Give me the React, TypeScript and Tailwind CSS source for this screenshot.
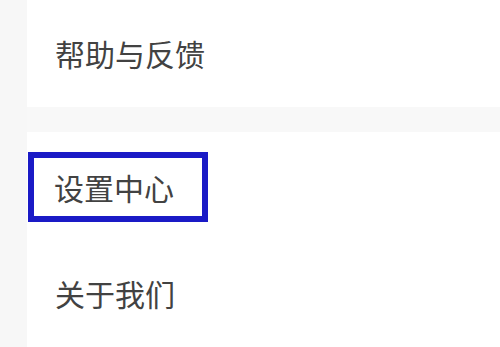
export default function App() {
  const font = { fontFamily: '"Noto Sans CJK SC", "Noto Sans", sans-serif' }
  return (
    <div className="flex h-[347px] w-[500px] overflow-hidden bg-[#f7f7f7]" style={font}>
      {/* left strip */}
      <div className="w-[27px] shrink-0" />

      <div className="flex flex-1 flex-col">
        {/* help row */}
        <div className="flex h-[107px] shrink-0 items-center bg-white pb-[1px] pl-[28px]">
          <span className="text-[30px] leading-none text-[#424242]">帮助与反馈</span>
        </div>

        {/* gap band */}
        <div className="h-[25px] shrink-0 bg-[#f8f8f8]" />

        {/* second group */}
        <div className="flex shrink-0 flex-col bg-white pt-[20px]">
          <div className="ml-[1px] flex h-[70px] w-[180px] shrink-0 items-center border-[6px] border-[#1a1ac6] pl-[20px]">
            <span className="text-[30px] leading-none text-[#424242]">设置中心</span>
          </div>
          <div className="flex h-[142px] shrink-0 items-center pl-[28px]">
            <span className="text-[30px] leading-none text-[#424242]">关于我们</span>
          </div>
        </div>
      </div>
    </div>
  )
}
